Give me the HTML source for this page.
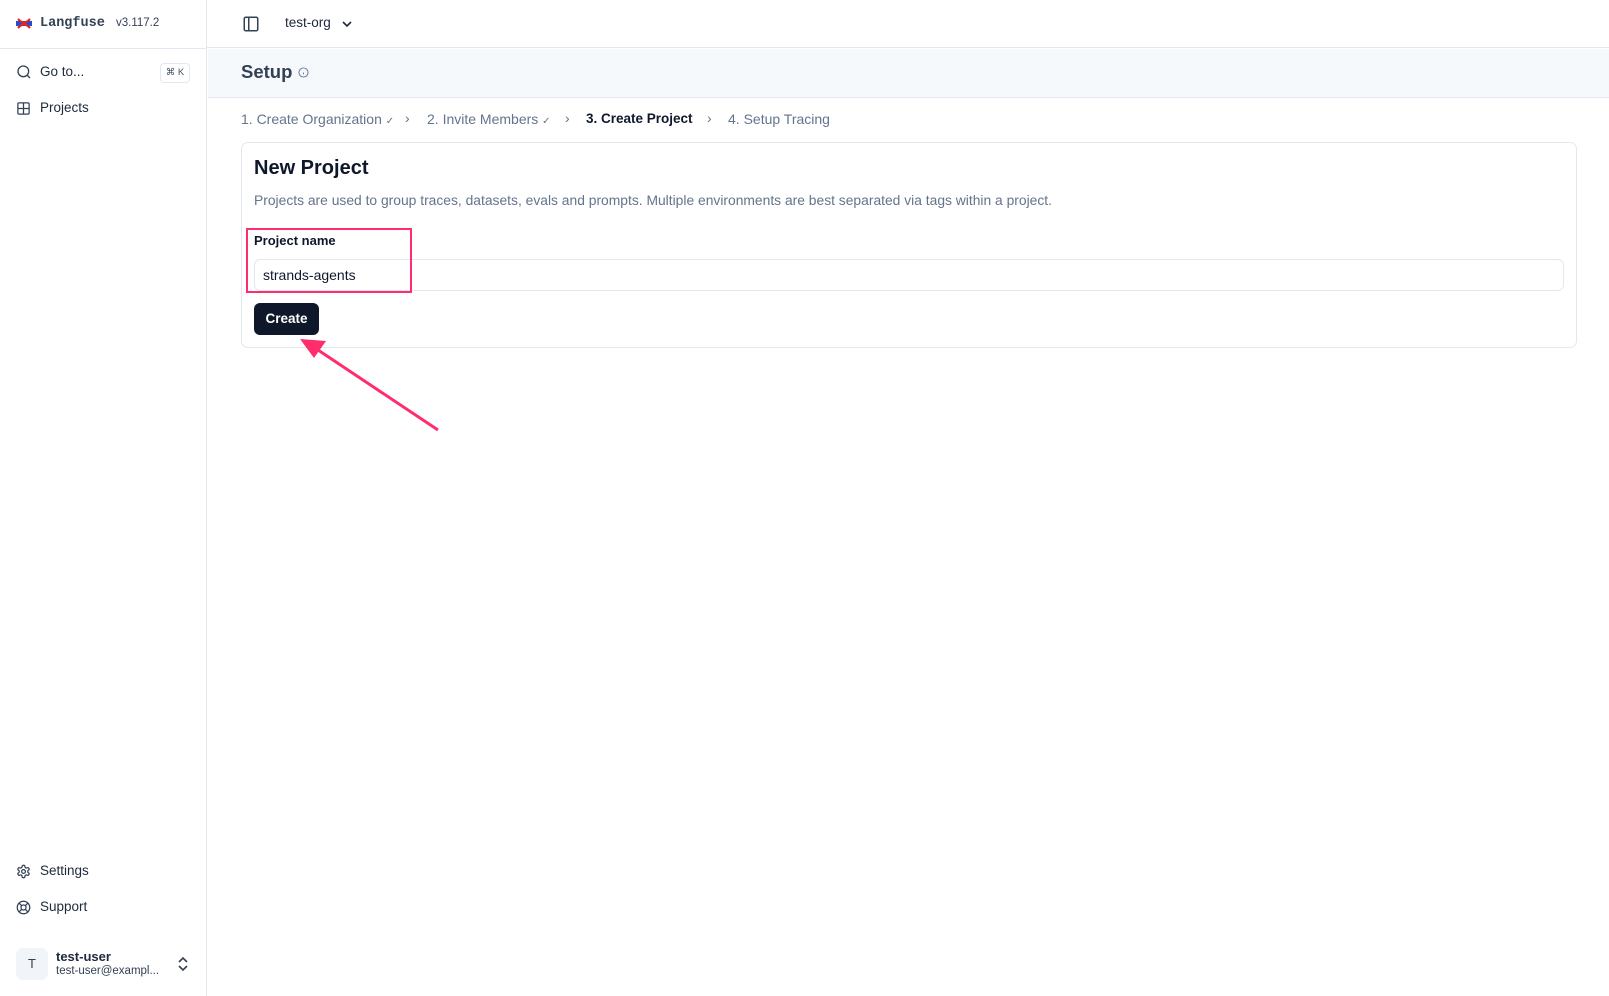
<!DOCTYPE html>
<html><head><meta charset="utf-8"><style>
*{box-sizing:border-box;margin:0;padding:0}
body{width:1609px;height:996px;overflow:hidden;background:#fff;font-family:"Liberation Sans",sans-serif;color:#0f172a;position:relative}
.a{position:absolute;white-space:nowrap}
svg{position:absolute}
.side{position:absolute;left:0;top:0;width:207px;height:996px;border-right:1px solid #e2e8f0}
.nav{font-size:13.5px;color:#1e293b}
</style></head><body>
<div class="side"></div>
<div class="a" style="left:0;top:48px;width:207px;border-top:1px solid #e2e8f0"></div>
<div class="a" style="left:207px;top:0;width:1402px;height:48px;border-bottom:1px solid #e2e8f0"></div>
<div class="a" style="left:208px;top:49px;width:1401px;height:49px;background:#f6f9fc;border-bottom:1px solid #e2e8f0"></div>

<svg style="left:15px;top:18px" width="18" height="11" viewBox="0 0 18 11"><rect x="1" y="3" width="16" height="5" fill="#1d4ed8"/><path d="M3 1 Q9 8 15 1 M3 10 Q9 3 15 10" stroke="#dc2626" stroke-width="2.2" fill="none"/></svg>
<div class="a" style="left:40px;top:16px;font-family:'Liberation Mono',monospace;font-weight:bold;font-size:13.5px;color:#334155">Langfuse</div>
<div class="a" style="left:116px;top:17px;font-size:11.5px;color:#334155">v3.117.2</div>

<svg style="left:16px;top:64px" width="16" height="16" viewBox="0 0 24 24" fill="none" stroke="#334155" stroke-width="2"><circle cx="11" cy="11" r="8"/><path d="M21 21l-4.3-4.3"/></svg>
<div class="a nav" style="left:40px;top:64px">Go to...</div>
<div class="a" style="left:160px;top:63px;width:30px;height:20px;border:1px solid #e2e8f0;border-radius:4px;font-size:9.5px;color:#475569;text-align:center;line-height:18px">⌘ K</div>
<svg style="left:16px;top:101px" width="15" height="15" viewBox="0 0 24 24" fill="none" stroke="#334155" stroke-width="2"><rect x="3" y="3" width="18" height="18" rx="2"/><path d="M3 12h18M12 3v18"/></svg>
<div class="a nav" style="left:40px;top:100px">Projects</div>

<svg style="left:16px;top:864px" width="15" height="15" viewBox="0 0 24 24" fill="none" stroke="#334155" stroke-width="2"><path d="M12.2 2h-.4a2 2 0 0 0-2 2v.2a2 2 0 0 1-1 1.7l-.4.3a2 2 0 0 1-2 0l-.2-.1a2 2 0 0 0-2.7.7l-.2.4a2 2 0 0 0 .7 2.7l.2.1a2 2 0 0 1 1 1.7v.5a2 2 0 0 1-1 1.7l-.2.1a2 2 0 0 0-.7 2.7l.2.4a2 2 0 0 0 2.7.7l.2-.1a2 2 0 0 1 2 0l.4.3a2 2 0 0 1 1 1.7v.2a2 2 0 0 0 2 2h.4a2 2 0 0 0 2-2v-.2a2 2 0 0 1 1-1.7l.4-.3a2 2 0 0 1 2 0l.2.1a2 2 0 0 0 2.7-.7l.2-.4a2 2 0 0 0-.7-2.7l-.2-.1a2 2 0 0 1-1-1.7v-.5a2 2 0 0 1 1-1.7l.2-.1a2 2 0 0 0 .7-2.7l-.2-.4a2 2 0 0 0-2.7-.7l-.2.1a2 2 0 0 1-2 0l-.4-.3a2 2 0 0 1-1-1.7V4a2 2 0 0 0-2-2z"/><circle cx="12" cy="12" r="3"/></svg>
<div class="a nav" style="left:40px;top:863px">Settings</div>
<svg style="left:16px;top:900px" width="15" height="15" viewBox="0 0 24 24" fill="none" stroke="#334155" stroke-width="2"><circle cx="12" cy="12" r="10"/><circle cx="12" cy="12" r="4"/><path d="M4.9 4.9l4.3 4.3M14.8 14.8l4.3 4.3M14.8 9.2l4.3-4.3M4.9 19.1l4.3-4.3"/></svg>
<div class="a nav" style="left:40px;top:899px">Support</div>

<div class="a" style="left:16px;top:948px;width:32px;height:32px;background:#f1f5f9;border-radius:7px;font-size:13px;color:#334155;text-align:center;line-height:32px">T</div>
<div class="a" style="left:56px;top:949px;font-size:13px;font-weight:bold;color:#1e293b">test-user</div>
<div class="a" style="left:56px;top:965px;font-size:11.5px;color:#334155">test-user@exampl...</div>
<svg style="left:176px;top:956px" width="14" height="16" viewBox="0 0 14 16" fill="none" stroke="#334155" stroke-width="1.6"><path d="M3 6l4-4 4 4M3 10l4 4 4-4"/></svg>

<svg style="left:242px;top:15px" width="18" height="18" viewBox="0 0 24 24" fill="none" stroke="#334155" stroke-width="2"><rect x="3" y="3" width="18" height="18" rx="2"/><path d="M9 3v18"/></svg>
<div class="a" style="left:285px;top:15px;font-size:13.5px;color:#1e293b">test-org</div>
<svg style="left:341px;top:19px" width="12" height="10" viewBox="0 0 12 10" fill="none" stroke="#1e293b" stroke-width="1.6"><path d="M2 3l4 4 4-4"/></svg>

<div class="a" style="left:241px;top:61px;font-size:18.5px;font-weight:bold;color:#334155">Setup</div>
<svg style="left:298px;top:67px" width="11" height="11" viewBox="0 0 24 24" fill="none" stroke="#64748b" stroke-width="2"><circle cx="12" cy="12" r="10"/><path d="M12 16v-4M12 8h.01"/></svg>

<div class="a" style="left:241px;top:111px;font-size:14px;color:#64748b">1. Create Organization <span style="font-size:10px">✓</span></div>
<div class="a" style="left:405px;top:110px;font-size:14px;color:#64748b">›</div>
<div class="a" style="left:427px;top:111px;font-size:14px;color:#64748b">2. Invite Members <span style="font-size:10px">✓</span></div>
<div class="a" style="left:565px;top:110px;font-size:14px;color:#64748b">›</div>
<div class="a" style="left:586px;top:111px;font-size:13.5px;font-weight:bold;color:#0f172a">3. Create Project</div>
<div class="a" style="left:707px;top:110px;font-size:14px;color:#64748b">›</div>
<div class="a" style="left:728px;top:111px;font-size:14px;color:#64748b">4. Setup Tracing</div>

<div class="a" style="left:241px;top:142px;width:1336px;height:206px;border:1px solid #e2e8f0;border-radius:7px"></div>
<div class="a" style="left:254px;top:157px;font-size:20px;font-weight:bold;color:#0f172a">New Project</div>
<div class="a" style="left:254px;top:192px;font-size:13.85px;color:#64748b">Projects are used to group traces, datasets, evals and prompts. Multiple environments are best separated via tags within a project.</div>
<div class="a" style="left:254px;top:233px;font-size:13px;font-weight:bold;color:#0f172a">Project name</div>
<div class="a" style="left:254px;top:259px;width:1310px;height:32px;border:1px solid #e2e8f0;border-radius:6px"></div>
<div class="a" style="left:263px;top:267px;font-size:14px;color:#0f172a">strands-agents</div>
<div class="a" style="left:246px;top:228px;width:166px;height:65px;border:2px solid #ff2d6b"></div>
<div class="a" style="left:254px;top:303px;width:65px;height:32px;background:#0f172a;border-radius:6px;color:#fff;font-size:13.5px;font-weight:bold;text-align:center;line-height:32px">Create</div>

<svg style="left:0;top:0" width="1609" height="996"><line x1="438" y1="430" x2="312" y2="346" stroke="#ff2d6b" stroke-width="3"/><polygon points="300,339 326,341 314,358" fill="#ff2d6b"/></svg>
</body></html>
